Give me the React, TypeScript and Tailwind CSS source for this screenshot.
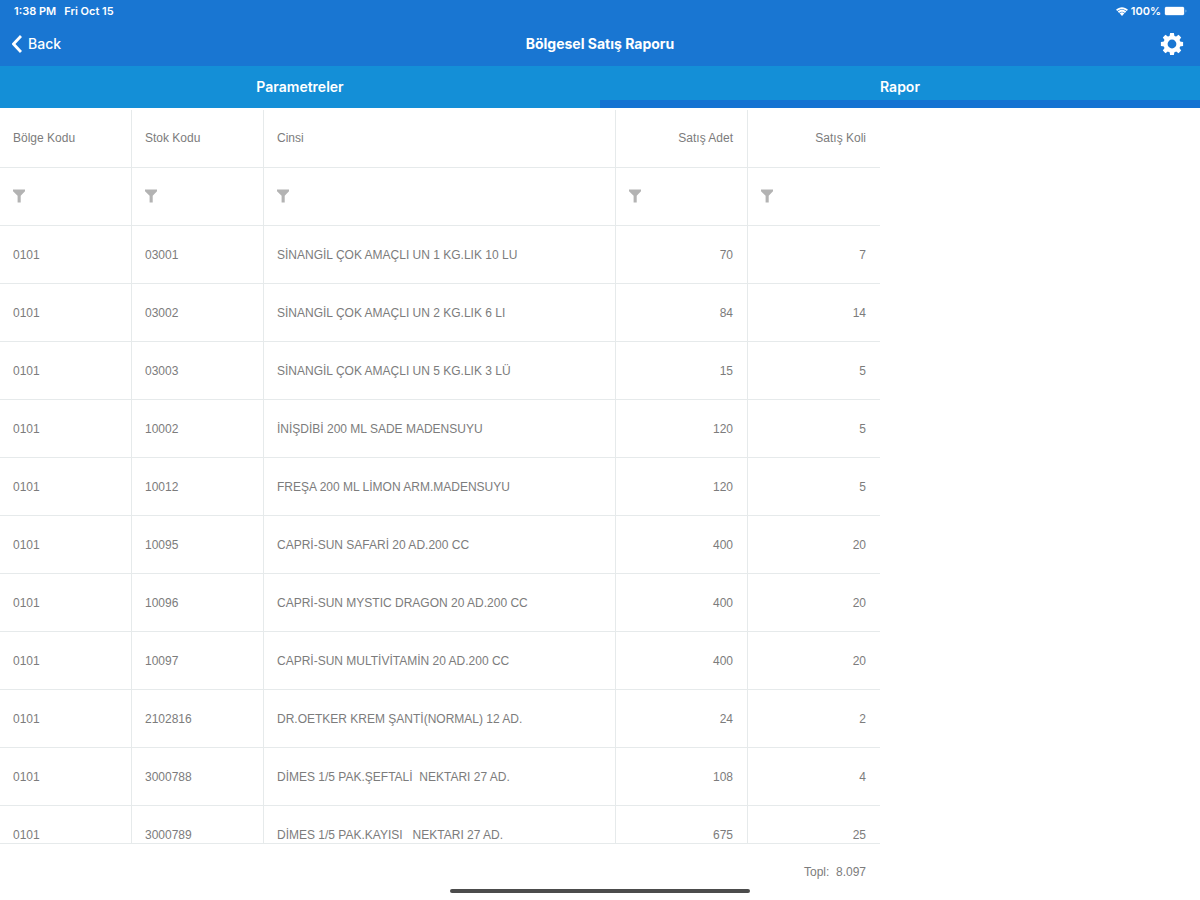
import { ReactNode } from "react";

type Row = [string, string, string, string, string];

const columns = [
  { label: "Bölge Kodu", numeric: false },
  { label: "Stok Kodu", numeric: false },
  { label: "Cinsi", numeric: false },
  { label: "Satış Adet", numeric: true },
  { label: "Satış Koli", numeric: true },
];

const rows: Row[] = [
  ["0101", "03001", "SİNANGİL ÇOK AMAÇLI UN 1 KG.LIK 10 LU", "70", "7"],
  ["0101", "03002", "SİNANGİL ÇOK AMAÇLI UN 2 KG.LIK 6 LI", "84", "14"],
  ["0101", "03003", "SİNANGİL ÇOK AMAÇLI UN 5 KG.LIK 3 LÜ", "15", "5"],
  ["0101", "10002", "İNİŞDİBİ 200 ML SADE MADENSUYU", "120", "5"],
  ["0101", "10012", "FREŞA 200 ML LİMON ARM.MADENSUYU", "120", "5"],
  ["0101", "10095", "CAPRİ-SUN SAFARİ 20 AD.200 CC", "400", "20"],
  ["0101", "10096", "CAPRİ-SUN MYSTIC DRAGON 20 AD.200 CC", "400", "20"],
  ["0101", "10097", "CAPRİ-SUN MULTİVİTAMİN 20 AD.200 CC", "400", "20"],
  ["0101", "2102816", "DR.OETKER KREM ŞANTİ(NORMAL) 12 AD.", "24", "2"],
  ["0101", "3000788", "DİMES 1/5 PAK.ŞEFTALİ  NEKTARI 27 AD.", "108", "4"],
  ["0101", "3000789", "DİMES 1/5 PAK.KAYISI   NEKTARI 27 AD.", "675", "25"],
];

function WifiIcon() {
  return (
    <svg viewBox="0 0 12 9" className="h-[9px] w-3" fill="currentColor" aria-hidden="true">
      <path d="M0 2.8C3.4-.7 8.6-.7 12 2.8L10.7 4.1C8.1 1.5 3.9 1.5 1.3 4.1z" />
      <path d="M1.7 4.4c2.5-2.3 6.1-2.3 8.6 0L8.9 5.9c-1.6-1.5-4.2-1.5-5.8 0z" />
      <path d="M3.6 6.3c1.4-1.3 3.4-1.3 4.8 0L6 8.9z" />
    </svg>
  );
}

function BatteryIcon() {
  return (
    <svg viewBox="0 0 24 10" className="h-[10px] w-6" fill="currentColor" aria-hidden="true">
      <rect x="0.5" y="0.5" width="20" height="9" rx="2" fillOpacity="0.35" />
      <rect x="1" y="1" width="19" height="8" rx="1.2" />
      <path d="M21.5 3.5c1.2.3 1.2 2.7 0 3z" fillOpacity="0.5" />
    </svg>
  );
}

function GearIcon() {
  return (
    <svg viewBox="0 0 24 24" className="size-6" aria-hidden="true">
      <g fill="currentColor">
        {[0, 45, 90, 135].map((angle) => (
          <path key={angle} d="M9.5 4.5L10.1.9h3.8l.6 3.6v15l-.6 3.6h-3.8l-.6-3.6z" transform={`rotate(${angle} 12 12)`} />
        ))}
        <circle cx="12" cy="12" r="8.6" />
      </g>
      <circle cx="12" cy="12" r="4.4" fill="#1976d2" />
    </svg>
  );
}

function FilterIcon() {
  return (
    <svg viewBox="0 0 12 14" className="h-[14px] w-3" fill="#b3b3b3" aria-hidden="true">
      <path d="M0 .5h12v1.7L7.7 6.8v6.7H4.6V6.8L0 2.2z" />
    </svg>
  );
}

function Tab({ active, children }: { active?: boolean; children: ReactNode }) {
  return (
    <button
      type="button"
      role="tab"
      aria-selected={!!active}
      className={
        active
          ? "flex-1 border-b-8 border-[#1473d2] pt-2 text-sm font-semibold"
          : "flex-1 border-b-8 border-transparent pt-2 text-sm font-semibold"
      }
    >
      {children}
    </button>
  );
}

export default function App() {
  return (
    <div className="relative flex h-screen flex-col overflow-hidden bg-white font-['Inter','Liberation_Sans',sans-serif] text-white">
      <header className="bg-[#1976d2]">
        <div className="flex h-[22px] items-center justify-between pr-3 pl-[14px] text-[11px] font-semibold">
          <div className="flex gap-2">
            <span>1:38 PM</span>
            <span>Fri Oct 15</span>
          </div>
          <div className="flex items-center gap-[3px]">
            <WifiIcon />
            <span>100%</span>
            <BatteryIcon />
          </div>
        </div>
        <div className="grid h-11 grid-cols-3 items-center px-3 text-sm">
          <button type="button" className="flex items-center gap-[6px] justify-self-start font-medium">
            <svg viewBox="0 0 10 18" className="h-[18px] w-[10px]" fill="none" stroke="currentColor" strokeWidth="2.8" aria-hidden="true">
              <path d="M9 1L1.5 9 9 17" />
            </svg>
            Back
          </button>
          <h1 className="text-center font-bold">Bölgesel Satış Raporu</h1>
          <button type="button" aria-label="Ayarlar" className="mr-1 justify-self-end">
            <GearIcon />
          </button>
        </div>
      </header>

      <div role="tablist" className="flex h-[42px] shrink-0 bg-[#148fd7]">
        <Tab>Parametreler</Tab>
        <Tab active>Rapor</Tab>
      </div>

      <main className="flex min-h-0 flex-1 flex-col pt-[2px] font-['Liberation_Sans',sans-serif] text-xs text-[#7c7c7c]">
        <div className="min-h-0 flex-1 overflow-hidden">
          <table className="w-[880px] table-fixed border-separate border-spacing-0">
            <colgroup>
              <col className="w-[15%]" />
              <col className="w-[15%]" />
              <col className="w-[40%]" />
              <col className="w-[15%]" />
              <col className="w-[15%]" />
            </colgroup>
            <thead>
              <tr>
                {columns.map((column) => (
                  <th
                    key={column.label}
                    scope="col"
                    className={
                      column.numeric
                        ? "h-[58px] border-r border-b border-[#e6eaeb] pr-[14px] pb-[2px] pl-[13px] text-right font-normal last:border-r-0"
                        : "h-[58px] border-r border-b border-[#e6eaeb] px-[13px] pb-[2px] text-left font-normal"
                    }
                  >
                    {column.label}
                  </th>
                ))}
              </tr>
              <tr>
                {columns.map((column) => (
                  <td key={column.label} className="h-[58px] border-r border-b border-[#e6eaeb] px-[13px] pb-[2px] last:border-r-0">
                    <button type="button" aria-label={`${column.label} filtre`} className="block">
                      <FilterIcon />
                    </button>
                  </td>
                ))}
              </tr>
            </thead>
            <tbody>
              {rows.map((row) => (
                <tr key={row[1]}>
                  {row.map((value, index) => (
                    <td
                      key={columns[index].label}
                      className={
                        columns[index].numeric
                          ? "h-[58px] border-r border-b border-[#e6eaeb] pr-[14px] pl-[13px] text-right last:border-r-0"
                          : "h-[58px] border-r border-b border-[#e6eaeb] px-[13px] whitespace-pre"
                      }
                    >
                      {value}
                    </td>
                  ))}
                </tr>
              ))}
            </tbody>
          </table>
        </div>
        <footer className="flex h-[57px] w-[880px] shrink-0 items-center justify-end border-t border-[#e6eaeb] pr-[14px] whitespace-pre">
          Topl:  8.097
        </footer>
      </main>

      <div className="absolute bottom-[7px] left-1/2 h-1 w-1/4 -translate-x-1/2 rounded-full bg-[#4c4c4c]" />
    </div>
  );
}
